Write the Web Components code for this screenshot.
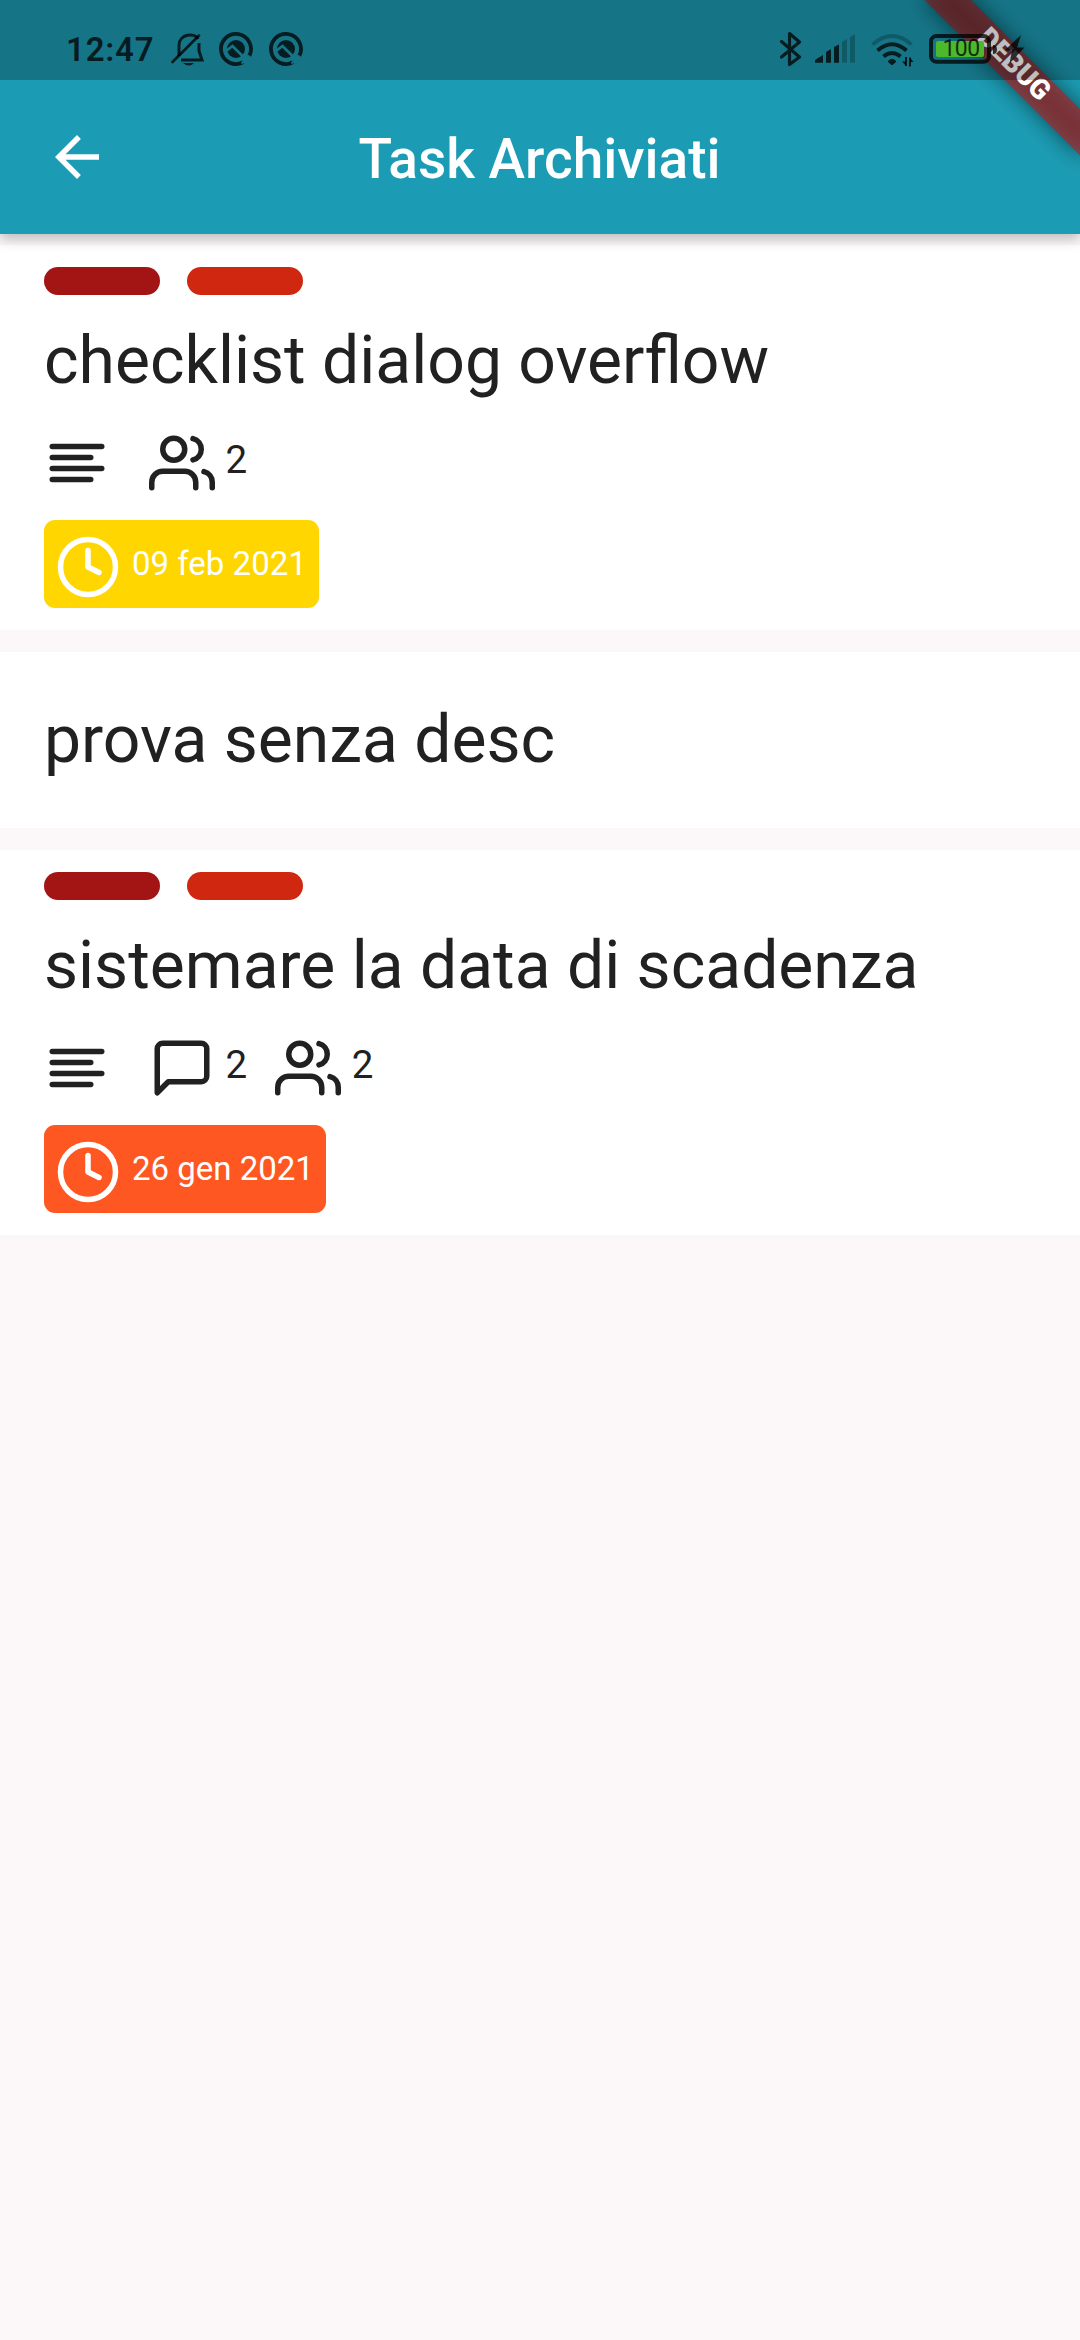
<!DOCTYPE html>
<html lang="it">
<head>
<meta charset="utf-8">
<title>Task Archiviati</title>
<style>
html,body{margin:0;padding:0;background:#fcf8f9;font-family:Roboto,"Noto Sans",sans-serif;color:#212121}
</style>
</head>
<body>
<archive-screen>
  <app-bar>Task Archiviati</app-bar>
  <task-list>
    <task-card labels="#a31515,#d02810" description members="2" due="09 feb 2021" due-color="#ffd600">checklist dialog overflow</task-card>
    <task-card>prova senza desc</task-card>
    <task-card labels="#a31515,#d02810" description comments="2" members="2" due="26 gen 2021" due-color="#ff5722">sistemare la data di scadenza</task-card>
  </task-list>
  <debug-banner slot="overlay"></debug-banner>
  <status-bar slot="overlay"></status-bar>
</archive-screen>
<script>
class Base extends HTMLElement {
  connectedCallback() {
    if (!this.shadowRoot) this.attachShadow({ mode: 'open' }).innerHTML = this.render();
  }
}

const ICONS = {
  text: '<path d="M17 10H3M21 6H3M21 14H3M17 18H3"/>',
  users: '<path d="M17 21v-2a4 4 0 0 0-4-4H5a4 4 0 0 0-4 4v2"/><circle cx="9" cy="7" r="4"/><path d="M23 21v-2a4 4 0 0 0-3-3.87M16 3.13a4 4 0 0 1 0 7.75"/>',
  comment: '<path d="M21 15a2 2 0 0 1-2 2H7l-4 4V5a2 2 0 0 1 2-2h14a2 2 0 0 1 2 2z"/>',
  clock: '<circle cx="12" cy="12" r="10"/><path d="M12 6v6l4 2"/>'
};

customElements.define('line-icon', class extends Base {
  render() {
    return `<style>:host{display:block;width:66px;height:66px;flex:none}svg{display:block;width:100%;height:100%;fill:none;stroke:currentColor;stroke-width:2;stroke-linecap:round;stroke-linejoin:round}</style>
    <svg viewBox="0 0 24 24">${ICONS[this.getAttribute('name')]}</svg>`;
  }
});

customElements.define('archive-screen', class extends Base {
  render() {
    return `<style>:host{display:flex;flex-direction:column;position:relative;width:1080px;height:2340px;overflow:hidden;background:#fcf8f9}</style>
    <slot></slot><slot name="overlay"></slot>`;
  }
});

customElements.define('app-bar', class extends Base {
  render() {
    return `<style>
    :host{display:block;box-sizing:border-box;height:234px;padding-top:80px;background:#1c9cb4;color:#fff;position:relative;z-index:1;box-shadow:0 5px 12px rgba(0,0,0,.25)}
    .row{display:grid;grid-template-columns:154px 1fr 154px;align-items:center;height:154px}
    svg{display:block;width:66px;height:66px;margin-left:44px;fill:#fff}
    h1{margin:0 1px 0 0;padding-top:3px;font:500 55px/64px Roboto,sans-serif;text-align:center;white-space:nowrap}
    </style>
    <div class="row"><svg viewBox="0 0 24 24"><path d="M20 11H7.83l5.59-5.59L12 4l-8 8 8 8 1.41-1.41L7.83 13H20v-2z"/></svg><h1><slot></slot></h1></div>`;
  }
});

customElements.define('task-list', class extends Base {
  render() {
    return `<style>:host{display:flex;flex-direction:column;gap:22px;padding-top:11px}</style><slot></slot>`;
  }
});

customElements.define('label-pill', class extends Base {
  render() {
    return `<style>:host{display:block;width:115.5px;height:27.5px;border-radius:14px;background:${this.getAttribute('color')}}</style>`;
  }
});

customElements.define('due-chip', class extends Base {
  render() {
    return `<style>
    :host{display:flex;align-items:center;align-self:flex-start;box-sizing:border-box;height:88px;padding:5px 12px 0 11px;gap:11px;border-radius:11px;background:${this.getAttribute('color')};color:#fff}
    span{font-size:33px;line-height:39px;white-space:nowrap;margin-top:-7px}
    </style><line-icon name="clock"></line-icon><span><slot></slot></span>`;
  }
});

customElements.define('task-card', class extends Base {
  render() {
    const a = n => this.getAttribute(n);
    const labels = (a('labels') || '').split(',').filter(Boolean);
    const meta = [];
    if (this.hasAttribute('description')) meta.push('<div class="m d"><line-icon name="text"></line-icon></div>');
    if (a('comments')) meta.push(`<div class="m"><line-icon name="comment"></line-icon><span>${a('comments')}</span></div>`);
    if (a('members')) meta.push(`<div class="m"><line-icon name="users"></line-icon><span>${a('members')}</span></div>`);
    return `<style>
    :host{display:flex;flex-direction:column;box-sizing:border-box;background:#fff;padding:${labels.length ? '22px 44px' : '49px 44px 50px'}}
    .labels{display:flex;gap:27.5px;margin-bottom:27px}
    h2{margin:0;font:400 66px/77px Roboto,sans-serif;white-space:nowrap}
    .meta{display:flex;gap:27.5px;margin:31px 0 24.5px}
    .m{display:flex;align-items:flex-start;gap:11px}
    .d{margin-right:11px}
    .m span{font-size:38.5px;line-height:45px;margin-top:7px}
    </style>
    ${labels.length ? `<div class="labels">${labels.map(c => `<label-pill color="${c}"></label-pill>`).join('')}</div>` : ''}
    <h2><slot></slot></h2>
    ${meta.length ? `<div class="meta">${meta.join('')}</div>` : ''}
    ${a('due') ? `<due-chip color="${a('due-color')}">${a('due')}</due-chip>` : ''}`;
  }
});

customElements.define('debug-banner', class extends Base {
  render() {
    return `<style>
    :host{position:absolute;left:1080px;top:0;width:0;height:0;z-index:2;transform:rotate(45deg);transform-origin:0 0}
    div,i{position:absolute;left:-110px;top:77px;width:220px;height:33px}
    div{box-sizing:border-box;padding:0 2px 4px 0;display:flex;align-items:center;justify-content:center;background:rgba(183,28,28,.627);color:#fff;font:900 28px/28px Roboto,sans-serif}
    i{background:rgba(0,0,0,.5);filter:blur(11px)}
    </style><i></i><div>DEBUG</div>`;
  }
});

customElements.define('status-bar', class extends Base {
  render() {
    return `<style>
    :host{position:absolute;left:0;top:0;width:1080px;height:80px;z-index:3;display:flex;justify-content:space-between;background:rgba(0,0,0,.25);color:rgba(0,0,0,.76)}
    .l,.r{display:flex}
    .l{padding-left:66px}
    b{font:600 33px/40px Roboto,sans-serif;letter-spacing:.8px;margin-top:30px;width:104px;white-space:nowrap}
    svg{display:block;height:80px;fill:none;stroke:currentColor}
    .bat{position:relative;width:80px}
    .bat span{position:absolute;left:13px;top:35px;font:400 23px/28px Roboto,sans-serif;letter-spacing:-.6px;width:38px;text-align:center}
    </style>
    <div class="l"><b>12:47</b>
      <svg width="150" viewBox="170 0 150 80">
        <mask id="cut" maskUnits="userSpaceOnUse" x="215" y="28" width="42" height="42"><rect x="215" y="28" width="42" height="42" fill="#fff" stroke="none"/><path d="M226 51L232.500 46L246 59.500" stroke="#000" stroke-width="2.800"/><path d="M241.500 63.500l8-8" stroke="#000" stroke-width="2"/></mask>
        <path d="M179 56V45c0-11 16-13 19-6M199 43v8l3 9H181" stroke-width="3"/>
        <path d="M172.500 62L199 35.500" stroke-width="2.800" stroke-linecap="round"/>
        <path d="M183 63h11q-5 5-11 0z" fill="currentColor" stroke="none"/>
        <g id="q"><path mask="url(#cut)" d="M243 62.200A15 15 0 1 1 249.300 55.800" stroke-width="3.800"/><circle mask="url(#cut)" cx="236" cy="49" r="9" fill="currentColor" stroke="none"/></g>
        <use href="#q" x="50"/>
      </svg></div>
    <div class="r">
      <svg width="149" viewBox="780 0 149 80">
        <path d="M781.500 41.500L799.500 57L789.500 64.500V33.500L799.500 42L781.500 57" stroke-width="3.200" stroke-linecap="round" stroke-linejoin="round"/>
        <g fill="currentColor" stroke="none"><path d="M815 62.800v-2q0-1 1-1.500l7-4.300v7.800zM826 62.800V52l5-3v13.800zM834 62.800V47l5-2.500v18.300z"/>
        <path opacity=".3" d="M842 62.800V42l5-3v23.800zM850 62.800V37l5-3v28.800z"/></g>
        <path d="M872.500 44.500Q892 27.500 911.500 44.500" stroke-width="4" opacity=".3"/>
        <path d="M877.500 50.500Q892 38 906.500 50.500M883.500 56.500Q892 49.500 900.500 56.500" stroke-width="4"/>
        <path d="M888 61.500q4-4.500 8 0L892 65z" fill="currentColor" stroke="currentColor" stroke-width=".8" stroke-linejoin="round"/>
        <path d="M906 57v9M910 57.500v9" stroke-width="2"/><path d="M906 66l-4-4.500h4zM910 57.500l3.500 4.500h-3.500z" fill="currentColor" stroke="none"/>
      </svg>
      <div class="bat"><svg width="100" viewBox="929 0 100 80">
        <rect x="936" y="41" width="48" height="16" rx="2" fill="#4cb82b" stroke="none"/>
        <rect x="931" y="36" width="58" height="25.700" rx="5.500" stroke-width="4"/>
        <path d="M993 45q4 0 4 4.500t-4 4.500z" fill="currentColor" stroke="none"/>
        <path d="M1021 35L1004.500 50.500H1012L1009.500 63.500L1024.500 47.500H1017z" fill="currentColor" stroke="none"/>
      </svg><span>100</span></div>
      <div style="width:71px"></div>
    </div>`;
  }
});
</script>
</body>
</html>
